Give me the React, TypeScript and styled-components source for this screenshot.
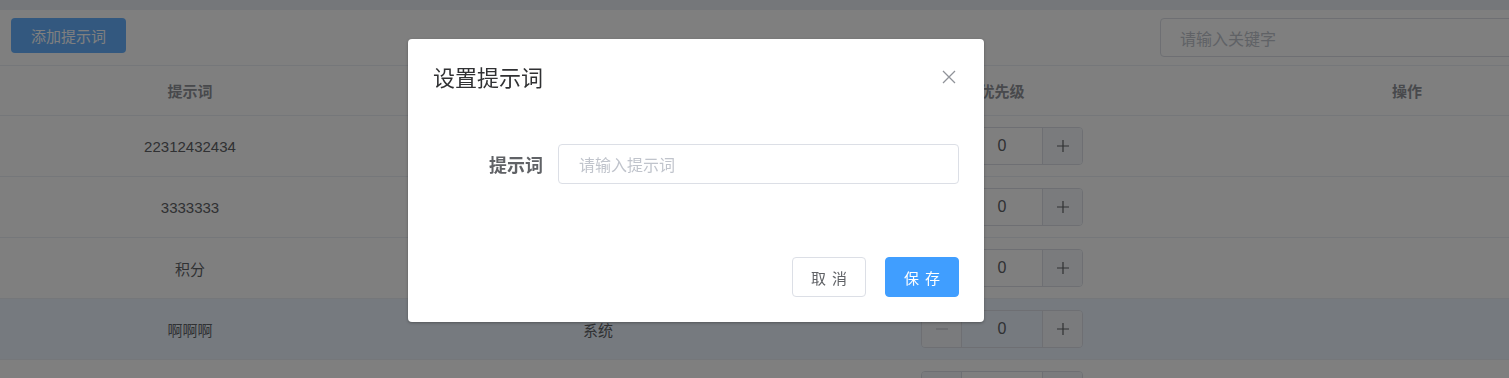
import React from "react";
import styled, { createGlobalStyle } from "styled-components";

const GlobalStyle = createGlobalStyle`
  html, body {
    margin: 0;
    padding: 0;
    overflow: hidden;
    background: #fff;
  }
  body {
    font-family: "Liberation Sans", "Noto Sans CJK SC", sans-serif;
  }
  * {
    box-sizing: border-box;
  }
`;

const COLUMNS = "380px 436px 372px 438px";

const Page = styled.div`
  width: 1630px;
`;
const TopStrip = styled.div`
  height: 10px;
  background: #ebeef5;
`;
const Toolbar = styled.div`
  display: flex;
  align-items: flex-start;
  height: 56px;
  padding: 8px 10px 0 11px;
  border-bottom: 1px solid #ebeef5;
`;
const AddButton = styled.button`
  height: 35px;
  padding: 0 20px;
  border: none;
  border-radius: 4px;
  background: #66b1ff;
  color: #fff;
  font-family: inherit;
  font-size: 15px;
`;
const SearchBox = styled.div`
  margin-left: auto;
  width: 460px;
  height: 39px;
  display: flex;
  align-items: center;
  padding-left: 19px;
  border: 1px solid #dcdfe6;
  border-radius: 4px;
  color: #c0c4cc;
  font-size: 16px;
`;
const HeaderRow = styled.div`
  display: grid;
  grid-template-columns: ${COLUMNS};
  height: 50px;
  border-bottom: 1px solid #ebeef5;
`;
const HeaderCell = styled.div`
  display: flex;
  align-items: center;
  justify-content: center;
  color: #909399;
  font-size: 15px;
  font-weight: bold;
`;
const Row = styled.div<{ $active?: boolean }>`
  display: grid;
  grid-template-columns: ${COLUMNS};
  height: 61px;
  border-bottom: 1px solid #ebeef5;
  background: ${(p) => (p.$active ? "#ecf5ff" : "#fff")};
`;
const Cell = styled.div`
  display: flex;
  align-items: center;
  justify-content: center;
  color: #606266;
  font-size: 15px;
`;
const NumberBox = styled.div`
  display: flex;
  width: 162px;
  height: 38px;
  border: 1px solid #dcdfe6;
  border-radius: 4px;
  overflow: hidden;
`;
const StepButton = styled.div<{ $disabled?: boolean; $side: "left" | "right" }>`
  width: 40px;
  display: flex;
  align-items: center;
  justify-content: center;
  background: #f5f7fa;
  color: ${(p) => (p.$disabled ? "#c0c4cc" : "#606266")};
  border-${(p) => (p.$side === "left" ? "right" : "left")}: 1px solid #dcdfe6;
`;
const NumberValue = styled.div`
  flex: 1;
  display: flex;
  align-items: center;
  justify-content: center;
  color: #606266;
  font-size: 16px;
`;

const Mask = styled.div`
  position: fixed;
  inset: 0;
  background: rgba(0, 0, 0, 0.5);
`;
const DialogLayer = styled.div`
  position: fixed;
  inset: 0;
  padding: 39px 0 0 408px;
`;
const Dialog = styled.div`
  width: 576px;
  background: #fff;
  border-radius: 4px;
  box-shadow: 0 1px 3px rgba(0, 0, 0, 0.3);
`;
const DialogHeader = styled.div`
  display: flex;
  align-items: center;
  justify-content: space-between;
  padding: 25px 27px 0 25px;
`;
const DialogTitle = styled.span`
  font-size: 22px;
  line-height: 30px;
  color: #303133;
`;
const CloseButton = styled.div`
  width: 16px;
  height: 16px;
  display: flex;
  color: #909399;
  margin-top: -4px;
`;
const DialogBody = styled.div`
  padding: 50px 25px 0;
`;
const FormItem = styled.div`
  display: flex;
  align-items: center;
`;
const FormLabel = styled.label`
  width: 125px;
  padding-right: 15px;
  text-align: right;
  color: #606266;
  font-size: 18px;
  font-weight: bold;
`;
const TextInput = styled.div`
  flex: 1;
  height: 40px;
  display: flex;
  align-items: center;
  padding-left: 20px;
  border: 1px solid #dcdfe6;
  border-radius: 4px;
  color: #c0c4cc;
  font-size: 16px;
`;
const DialogFooter = styled.div`
  display: flex;
  justify-content: flex-end;
  gap: 19px;
  padding: 73px 25px 25px;
`;
const FooterButton = styled.button<{ $primary?: boolean }>`
  width: 74px;
  height: 40px;
  border-radius: 4px;
  border: 1px solid ${(p) => (p.$primary ? "#409eff" : "#dcdfe6")};
  background: ${(p) => (p.$primary ? "#409eff" : "#fff")};
  color: ${(p) => (p.$primary ? "#fff" : "#606266")};
  font-family: inherit;
  font-size: 15px;
  letter-spacing: 6px;
  text-indent: 6px;
  padding: 0;
`;

const rows = [
  { word: "22312432434", source: "系统" },
  { word: "3333333", source: "系统" },
  { word: "积分", source: "系统" },
  { word: "啊啊啊", source: "系统", active: true },
  { word: "", source: "" },
];

function PlusIcon() {
  return (
    <svg width="14" height="14" viewBox="0 0 14 14">
      <path d="M7 1v12M1 7h12" stroke="currentColor" strokeWidth="1.2" />
    </svg>
  );
}
function MinusIcon() {
  return (
    <svg width="14" height="14" viewBox="0 0 14 14">
      <path d="M1 7h12" stroke="currentColor" strokeWidth="1.2" />
    </svg>
  );
}

export default function App() {
  return (
    <>
      <GlobalStyle />
      <Page>
        <TopStrip />
        <Toolbar>
          <AddButton>添加提示词</AddButton>
          <SearchBox>请输入关键字</SearchBox>
        </Toolbar>
        <HeaderRow>
          <HeaderCell>提示词</HeaderCell>
          <HeaderCell>类型</HeaderCell>
          <HeaderCell>优先级</HeaderCell>
          <HeaderCell>操作</HeaderCell>
        </HeaderRow>
        {rows.map((row, index) => (
          <Row key={index} $active={row.active}>
            <Cell>{row.word}</Cell>
            <Cell>{row.source}</Cell>
            <Cell>
              <NumberBox>
                <StepButton $side="left" $disabled>
                  <MinusIcon />
                </StepButton>
                <NumberValue>0</NumberValue>
                <StepButton $side="right">
                  <PlusIcon />
                </StepButton>
              </NumberBox>
            </Cell>
            <Cell />
          </Row>
        ))}
      </Page>
      <Mask />
      <DialogLayer>
        <Dialog>
          <DialogHeader>
            <DialogTitle>设置提示词</DialogTitle>
            <CloseButton>
              <svg width="16" height="16" viewBox="0 0 16 16">
                <path d="M2 2l12 12M14 2L2 14" stroke="currentColor" strokeWidth="1.3" />
              </svg>
            </CloseButton>
          </DialogHeader>
          <DialogBody>
            <FormItem>
              <FormLabel>提示词</FormLabel>
              <TextInput>请输入提示词</TextInput>
            </FormItem>
          </DialogBody>
          <DialogFooter>
            <FooterButton>取消</FooterButton>
            <FooterButton $primary>保存</FooterButton>
          </DialogFooter>
        </Dialog>
      </DialogLayer>
    </>
  );
}
